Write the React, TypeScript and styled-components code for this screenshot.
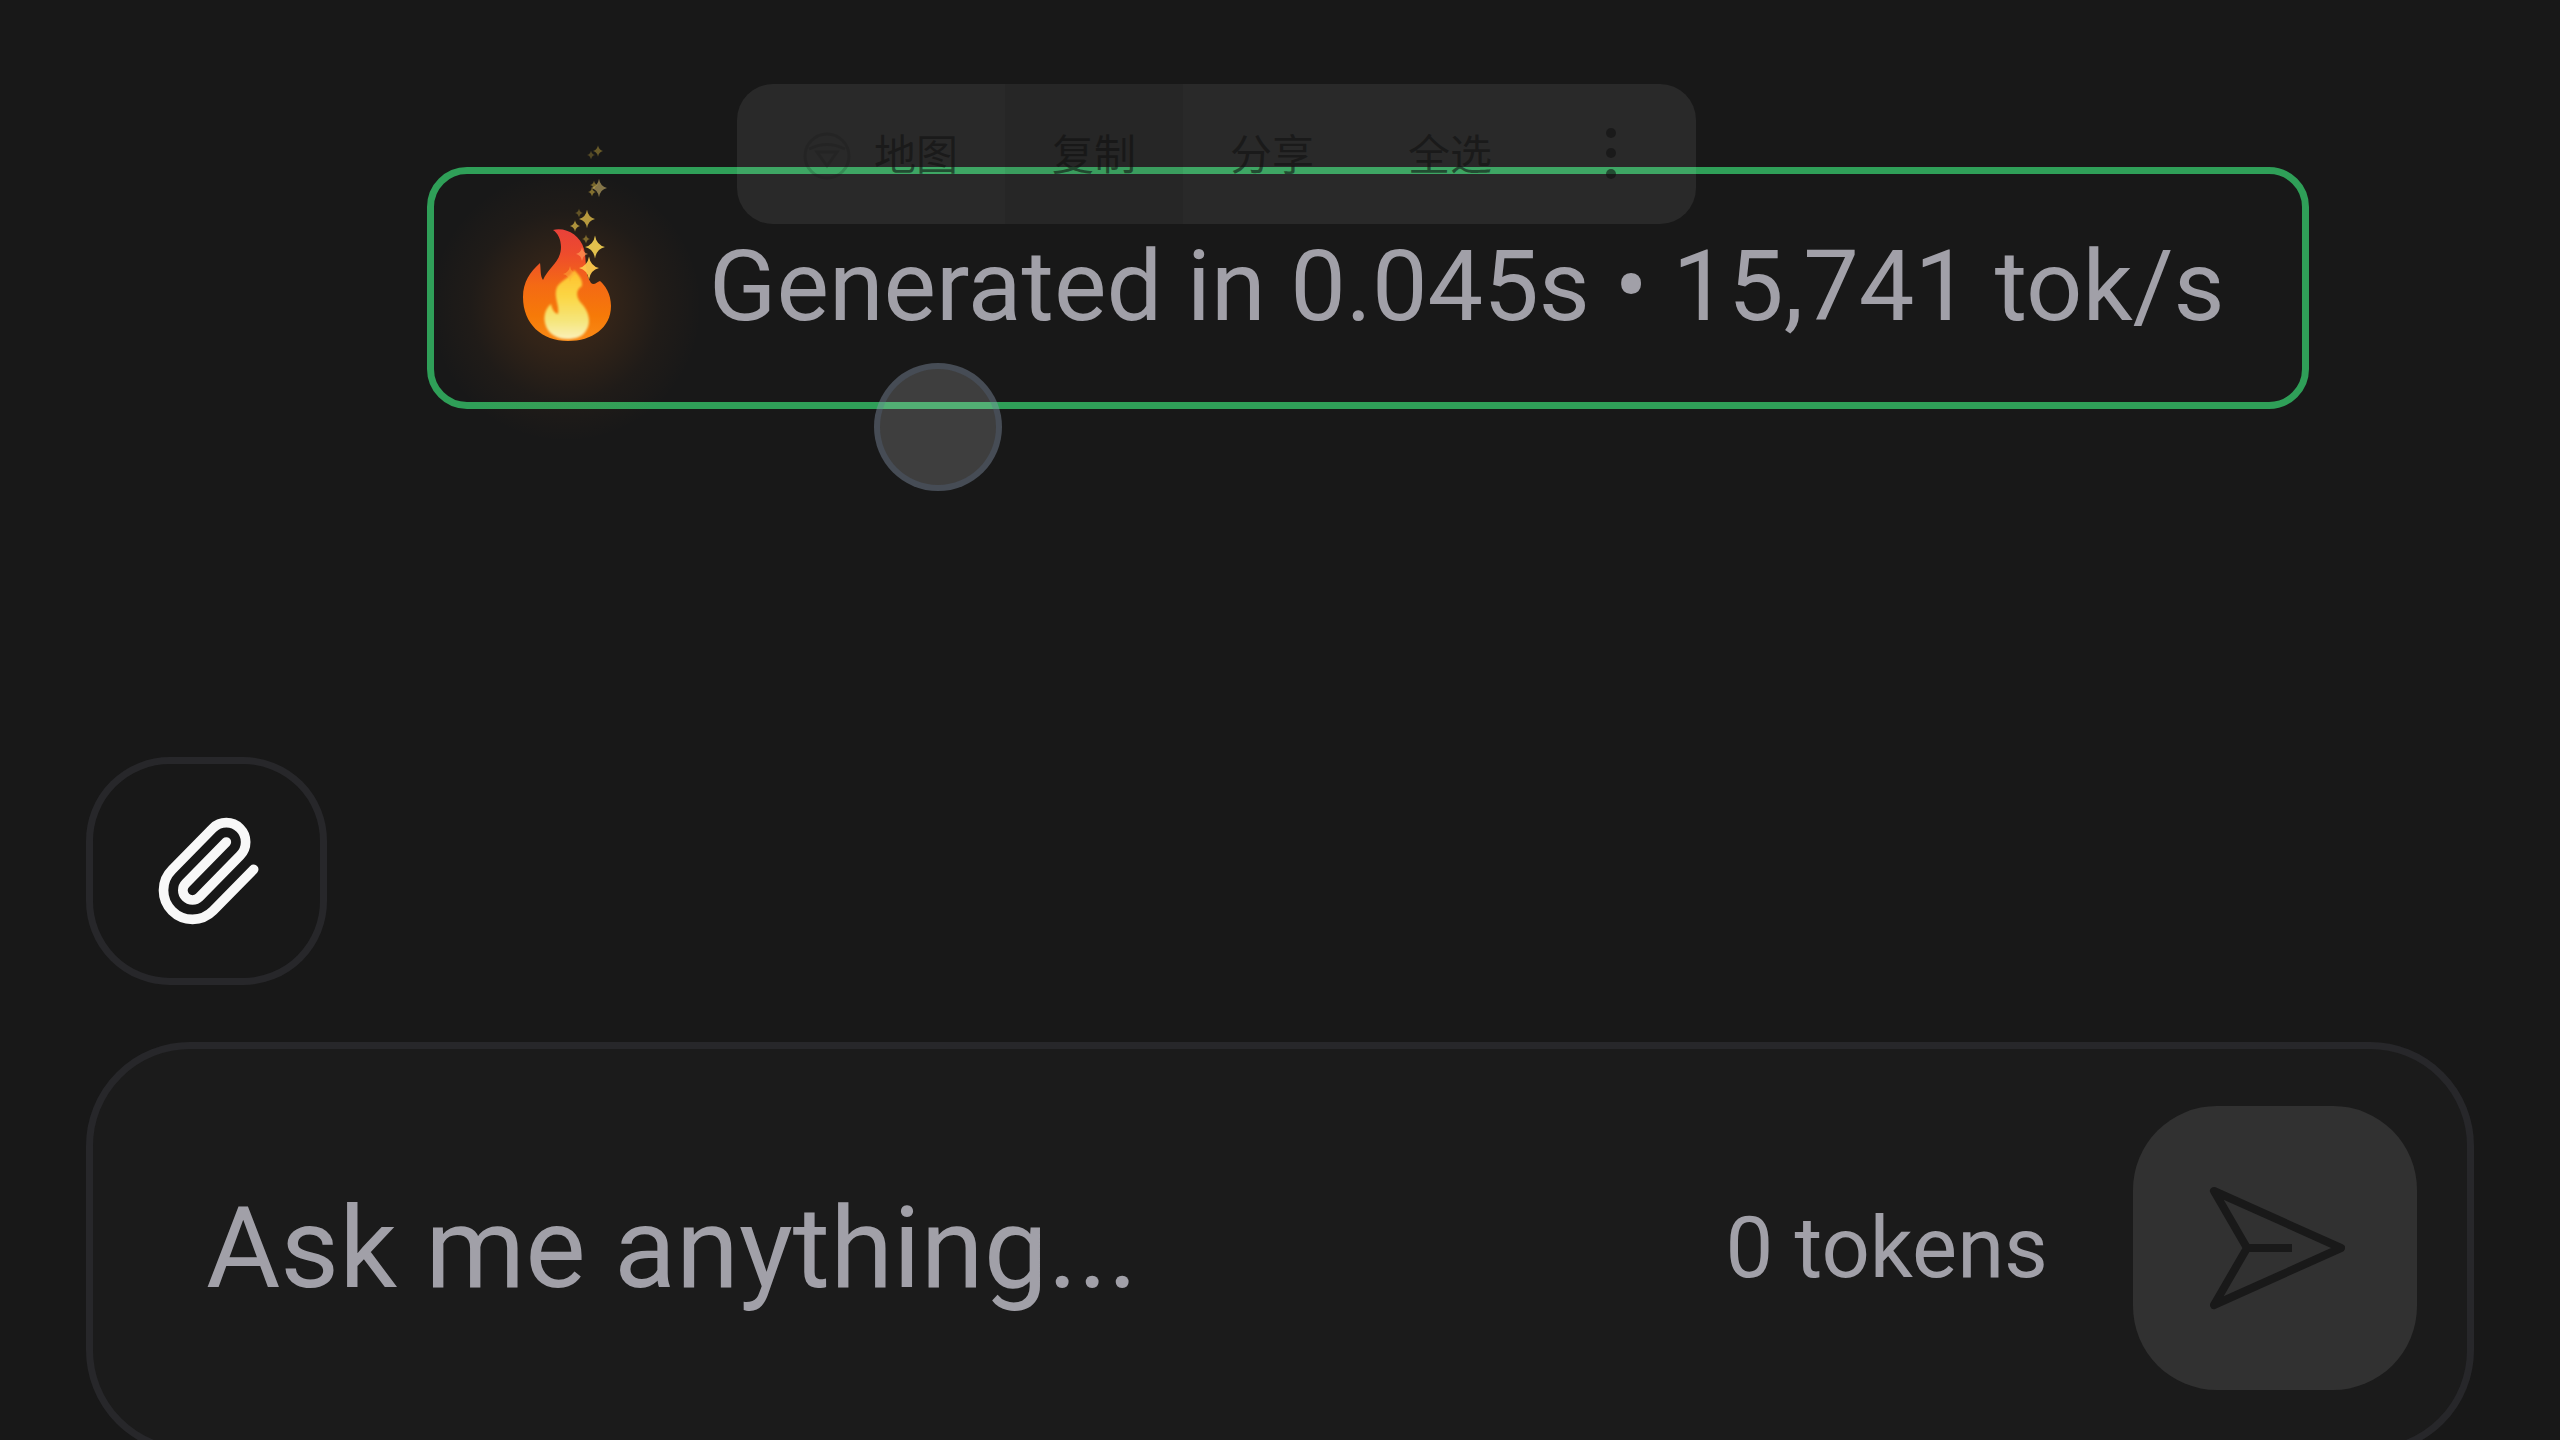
import React from "react";
import styled, { createGlobalStyle } from "styled-components";
import { Paperclip } from "lucide-react";

const GlobalStyle = createGlobalStyle`
  * { box-sizing: border-box; }
  body {
    margin: 0;
    background: #181818;
    font-family: Roboto, "Noto Sans CJK SC", sans-serif;
  }
  button, input { font-family: inherit; margin: 0; }
`;

const Screen = styled.main`
  height: 100vh;
  overflow: hidden;
  display: flex;
  flex-direction: column;
  padding: 167px 86px 0;
  background: #181818;
  color: #a1a0a8;
`;

const MessageArea = styled.section`
  display: flex;
  flex: none;
  padding-left: 341px;
  margin-bottom: 348px;
`;

const StatusBadge = styled.div`
  position: relative;
  display: flex;
  align-items: center;
  gap: 97px;
  height: 242px;
  padding: 0 77px 4px 88px;
  border: 7px solid #2f9f58;
  border-radius: 40px;
`;

const StatusText = styled.p`
  position: relative;
  margin: 0;
  font-size: 99px;
  line-height: 120px;
  white-space: nowrap;
`;

const Flame = styled.svg`
  flex: none;
  width: 90px;
  height: 112px;
  overflow: visible;
`;

const SelectionMenu = styled.div`
  position: absolute;
  left: 303px;
  top: -90px;
  display: flex;
  height: 140px;
  padding: 0 13px 0 19px;
  border-radius: 36px;
  background: rgba(255, 255, 255, 0.075);
`;

const MenuItem = styled.button<{ $active?: boolean }>`
  display: flex;
  align-items: center;
  gap: 23px;
  padding: 4px 47px 0;
  border: 0;
  background: ${(p) => (p.$active ? "rgba(0, 0, 0, 0.05)" : "transparent")};
  color: rgba(16, 16, 16, 0.6);
  font-size: 42px;
  line-height: 60px;
  white-space: nowrap;
`;

const MenuIcon = styled.svg`
  width: 48px;
  height: 48px;
  opacity: 0.3;
`;

const MoreIcon = styled.svg`
  width: 50px;
  height: 60px;
`;

const TouchPoint = styled.div`
  position: absolute;
  left: 440px;
  top: 189px;
  width: 128px;
  height: 128px;
  border: 6px solid rgba(90, 110, 145, 0.28);
  border-radius: 50%;
  background: rgba(255, 255, 255, 0.17);
`;

const AttachButton = styled.button`
  flex: none;
  display: flex;
  align-items: center;
  justify-content: center;
  width: 241px;
  height: 228px;
  margin-bottom: 57px;
  padding: 0;
  border: 7px solid #27272a;
  border-radius: 84px;
  background: transparent;
  color: #f8f8f8;
`;

const Composer = styled.form`
  flex: none;
  display: flex;
  align-items: center;
  gap: 85px;
  padding: 57px 50px 57px 113px;
  border: 7px solid #27272a;
  border-radius: 104px;
  background: #1b1b1b;
`;

const PromptInput = styled.input`
  flex: 1;
  min-width: 0;
  height: 140px;
  padding: 0;
  border: 0;
  outline: 0;
  background: transparent;
  color: #a1a0a8;
  font-size: 114px;
  &::placeholder { color: #a1a0a8; opacity: 1; }
`;

const TokenCount = styled.span`
  font-size: 85px;
  line-height: 104px;
  white-space: nowrap;
`;

const SendButton = styled.button`
  display: flex;
  align-items: center;
  justify-content: center;
  width: 284px;
  height: 284px;
  padding: 0;
  border: 0;
  border-radius: 84px;
  background: #313131;
  color: #191919;
`;

const SendIcon = styled.svg`
  width: 140px;
  height: 126px;
`;

/** A four-pointed sparkle centred on x, y. */
function Spark({ x, y, r, o, c = "#ffd84a" }: { x: number; y: number; r: number; o: number; c?: string }) {
  return (
    <path
      transform={`translate(${x} ${y}) scale(${r})`}
      d="M0-1.15Q.15-.2 1 0 .15.2 0 1.15-.15.2-1 0-.15-.2 0-1.15Z"
      fill={c}
      opacity={o}
    />
  );
}

function FlameIcon() {
  return (
    <Flame viewBox="0 0 90 112" aria-hidden="true">
      <defs>
        <radialGradient id="glow">
          <stop offset="0" stopColor="#f07818" stopOpacity="0.18" />
          <stop offset="0.35" stopColor="#f07818" stopOpacity="0.12" />
          <stop offset="0.7" stopColor="#f07818" stopOpacity="0.035" />
          <stop offset="1" stopColor="#f07818" stopOpacity="0" />
        </radialGradient>
        <linearGradient id="outer" x1="0" y1="0" x2="0" y2="1">
          <stop offset="0" stopColor="#e8413a" />
          <stop offset="0.22" stopColor="#ee4c2c" />
          <stop offset="0.5" stopColor="#f46a14" />
          <stop offset="0.78" stopColor="#f67a08" />
          <stop offset="1" stopColor="#f98a16" />
        </linearGradient>
        <linearGradient id="inner" x1="0" y1="0" x2="0" y2="1">
          <stop offset="0" stopColor="#ffc02c" />
          <stop offset="0.4" stopColor="#fbd746" />
          <stop offset="0.75" stopColor="#f5e67e" />
          <stop offset="1" stopColor="#fbefb8" />
        </linearGradient>
        <filter id="soft" x="-20%" y="-20%" width="140%" height="140%">
          <feGaussianBlur stdDeviation="1.2" />
        </filter>
      </defs>
      <circle cx="44" cy="76" r="136" fill="url(#glow)" />
      <path
        d="M31 0C44-3 58 5 62 19C65 31 62 42 69 53C72 56 75 52 78 51C83 55 89 64 89 76C89 98 70 111 46 111C20 111 1 94 1 67C1 52 8 42 18 33C19 39 18 46 21 50C26 38 39 32 39 17C39 10 36 3 31 0Z"
        fill="url(#outer)"
      />
      <path
        d="M52 40C56 44 61 49 60 56C53 60 54 68 60 74C67 82 69 92 65 99C61 107 54 109 45 109C34 109 25 103 23 93C21 84 25 77 29 74C30 79 32 83 36 84C38 76 31 66 35 57C39 50 47 49 52 40Z"
        fill="url(#inner)"
        filter="url(#soft)"
      />
      <Spark x={67} y={38} r={10} o={0.95} c="#ffc94d" />
      <Spark x={60} y={24} r={6} o={0.7} c="#ff9a55" />
      <Spark x={48} y={44} r={7} o={0.5} c="#ffb03a" />
      <Spark x={73} y={17} r={10} o={0.95} c="#ecca50" />
      <Spark x={64} y={9} r={4} o={0.4} />
      <Spark x={65} y={-11} r={8} o={0.8} c="#dcb948" />
      <Spark x={53} y={-4} r={5} o={0.75} c="#dcb948" />
      <Spark x={57} y={-17} r={4} o={0.3} />
      <Spark x={77} y={-42} r={8} o={0.6} c="#cdb46a" />
      <Spark x={70} y={-38} r={4} o={0.45} />
      <Spark x={72} y={-45} r={4} o={0.4} />
      <Spark x={76} y={-79} r={5} o={0.35} />
      <Spark x={69} y={-75} r={4} o={0.25} />
    </Flame>
  );
}

export default function App() {
  return (
    <>
      <GlobalStyle />
      <Screen>
        <MessageArea>
          <StatusBadge>
            <FlameIcon />
            <StatusText>Generated in 0.045s • 15,741 tok/s</StatusText>
            <SelectionMenu>
              <MenuItem type="button">
                <MenuIcon viewBox="0 0 48 48" fill="none" stroke="currentColor" strokeWidth="3" aria-hidden="true">
                  <circle cx="24" cy="24" r="22" />
                  <path d="M6 17q18-9 36 0M14 20h20L24 34z" />
                </MenuIcon>
                地图
              </MenuItem>
              <MenuItem type="button" $active>复制</MenuItem>
              <MenuItem type="button">分享</MenuItem>
              <MenuItem type="button">全选</MenuItem>
              <MenuItem type="button" aria-label="更多">
                <MoreIcon viewBox="0 0 50 60" fill="currentColor" aria-hidden="true">
                  <circle cx="25" cy="7" r="5" />
                  <circle cx="25" cy="27" r="5" />
                  <circle cx="25" cy="48" r="5" />
                </MoreIcon>
              </MenuItem>
            </SelectionMenu>
            <TouchPoint />
          </StatusBadge>
        </MessageArea>

        <AttachButton type="button" aria-label="Attach file">
          <Paperclip size={116} strokeWidth={2} aria-hidden="true" />
        </AttachButton>

        <Composer onSubmit={(e) => e.preventDefault()}>
          <PromptInput type="text" placeholder="Ask me anything..." aria-label="Ask me anything" />
          <TokenCount>0 tokens</TokenCount>
          <SendButton type="submit" aria-label="Send">
            <SendIcon
              viewBox="0 0 140 126"
              fill="none"
              stroke="currentColor"
              strokeWidth="8"
              strokeLinejoin="round"
              aria-hidden="true"
            >
              <path d="M9 6L136 63L9 120L42 63ZM42 63H87" />
            </SendIcon>
          </SendButton>
        </Composer>
      </Screen>
    </>
  );
}
